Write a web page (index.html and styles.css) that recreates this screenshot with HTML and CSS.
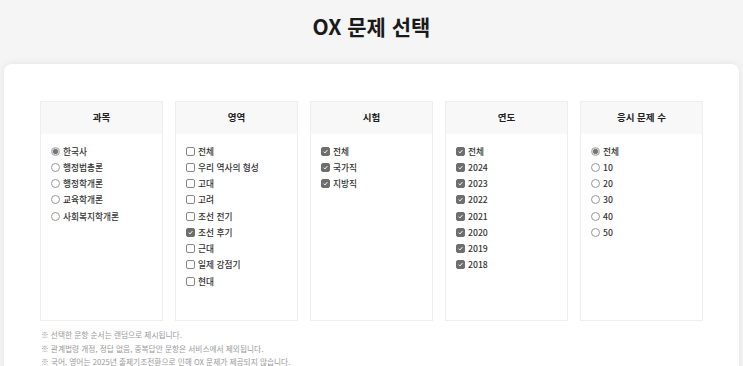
FILE: index.html
```html
<!DOCTYPE html>
<html lang="ko">
<head>
    <meta charset="UTF-8">
    <meta name="viewport" content="width=device-width, initial-scale=1.0">
    <title>OX 문제 선택</title>
    <link rel="stylesheet" href="styles.css">
</head>
<body>

    <h1 class="page-title">OX 문제 선택</h1>

    <div class="card">
        <div class="columns">
            <div class="column">
                <div class="column-head">과목</div>
                <div class="column-body">
                    <label class="option"><input type="radio" name="subject" checked> 한국사</label>
                    <label class="option"><input type="radio" name="subject"> 행정법총론</label>
                    <label class="option"><input type="radio" name="subject"> 행정학개론</label>
                    <label class="option"><input type="radio" name="subject"> 교육학개론</label>
                    <label class="option"><input type="radio" name="subject"> 사회복지학개론</label>
                </div>
            </div>

            <div class="column">
                <div class="column-head">영역</div>
                <div class="column-body">
                    <label class="option"><input type="checkbox"> 전체</label>
                    <label class="option"><input type="checkbox"> 우리 역사의 형성</label>
                    <label class="option"><input type="checkbox"> 고대</label>
                    <label class="option"><input type="checkbox"> 고려</label>
                    <label class="option"><input type="checkbox"> 조선 전기</label>
                    <label class="option"><input type="checkbox" checked> 조선 후기</label>
                    <label class="option"><input type="checkbox"> 근대</label>
                    <label class="option"><input type="checkbox"> 일제 강점기</label>
                    <label class="option"><input type="checkbox"> 현대</label>
                </div>
            </div>

            <div class="column">
                <div class="column-head">시험</div>
                <div class="column-body">
                    <label class="option"><input type="checkbox" checked> 전체</label>
                    <label class="option"><input type="checkbox" checked> 국가직</label>
                    <label class="option"><input type="checkbox" checked> 지방직</label>
                </div>
            </div>

            <div class="column">
                <div class="column-head">연도</div>
                <div class="column-body">
                    <label class="option"><input type="checkbox" checked> 전체</label>
                    <label class="option"><input type="checkbox" checked> 2024</label>
                    <label class="option"><input type="checkbox" checked> 2023</label>
                    <label class="option"><input type="checkbox" checked> 2022</label>
                    <label class="option"><input type="checkbox" checked> 2021</label>
                    <label class="option"><input type="checkbox" checked> 2020</label>
                    <label class="option"><input type="checkbox" checked> 2019</label>
                    <label class="option"><input type="checkbox" checked> 2018</label>
                </div>
            </div>

            <div class="column">
                <div class="column-head">응시 문제 수</div>
                <div class="column-body">
                    <label class="option"><input type="radio" name="count" checked> 전체</label>
                    <label class="option"><input type="radio" name="count"> 10</label>
                    <label class="option"><input type="radio" name="count"> 20</label>
                    <label class="option"><input type="radio" name="count"> 30</label>
                    <label class="option"><input type="radio" name="count"> 40</label>
                    <label class="option"><input type="radio" name="count"> 50</label>
                </div>
            </div>
        </div>

        <ul class="notes">
            <li>※ 선택한 문항 순서는 랜덤으로 제시됩니다.</li>
            <li>※ 관계법령 개정, 정답 없음, 중복답안 문항은 서비스에서 제외됩니다.</li>
            <li>※ 국어, 영어는 2025년 출제기조전환으로 인해 OX 문제가 제공되지 않습니다.</li>
        </ul>
    </div>

</body>
</html>
```

FILE: styles.css
```css
* {
    margin: 0;
    padding: 0;
    box-sizing: border-box;
}
body {
    background-color: #f5f5f5;
    color: #222;
    font-family: "Noto Sans CJK KR", "Noto Sans", sans-serif;
    height: 100vh;
    overflow: hidden;
}
.page-title {
    height: 64px;
    line-height: 52px;
    text-align: center;
    font-size: 21px;
    font-weight: bold;
    color: #1a1a1a;
}
.card {
    margin: 0 4px;
    background-color: white;
    border-radius: 8px;
    box-shadow: 0 0 8px rgba(0, 0, 0, 0.08);
    padding: 37px 36px 20px;
    min-height: 320px;
}
.columns {
    display: flex;
    gap: 12px;
}
.column {
    flex: 1;
    height: 220px;
    border: 1px solid #eeeeee;
}
.column-head {
    height: 32px;
    line-height: 31px;
    background-color: #f8f8f8;
    text-align: center;
    font-size: 9.5px;
    font-weight: bold;
    color: #222;
}
.column-body {
    display: flex;
    flex-direction: column;
    padding: 9px 10px 0;
}
.option {
    display: flex;
    align-items: center;
    gap: 3px;
    height: 16.25px;
    font-size: 8.7px;
    font-weight: 500;
    color: #333;
    white-space: nowrap;
}
.option input {
    appearance: none;
    width: 9px;
    height: 9px;
    margin: 0;
    flex: none;
    border: 1px solid #888;
    background-color: white;
}
.option input[type="checkbox"] {
    border-radius: 2px;
}
.option input[type="checkbox"]:checked {
    background-color: #6e6e6e;
    border-color: #6e6e6e;
    background-image: url("data:image/svg+xml,%3Csvg xmlns='http://www.w3.org/2000/svg' viewBox='0 0 10 10'%3E%3Cpath d='M2.5 5.2l1.8 1.8 3.4-4' fill='none' stroke='white' stroke-width='1.4'/%3E%3C/svg%3E");
    background-size: 100% 100%;
}
.option input[type="radio"] {
    border-radius: 50%;
    border-color: #999;
}
.option input[type="radio"]:checked {
    border-color: #aaa;
    background: radial-gradient(circle, #777 0 2.2px, #d6d6d6 2.7px);
}
.notes {
    list-style: none;
    margin-top: 7px;
    padding-left: 1px;
    font-size: 7.7px;
    line-height: 13.5px;
    color: #999;
}
```
